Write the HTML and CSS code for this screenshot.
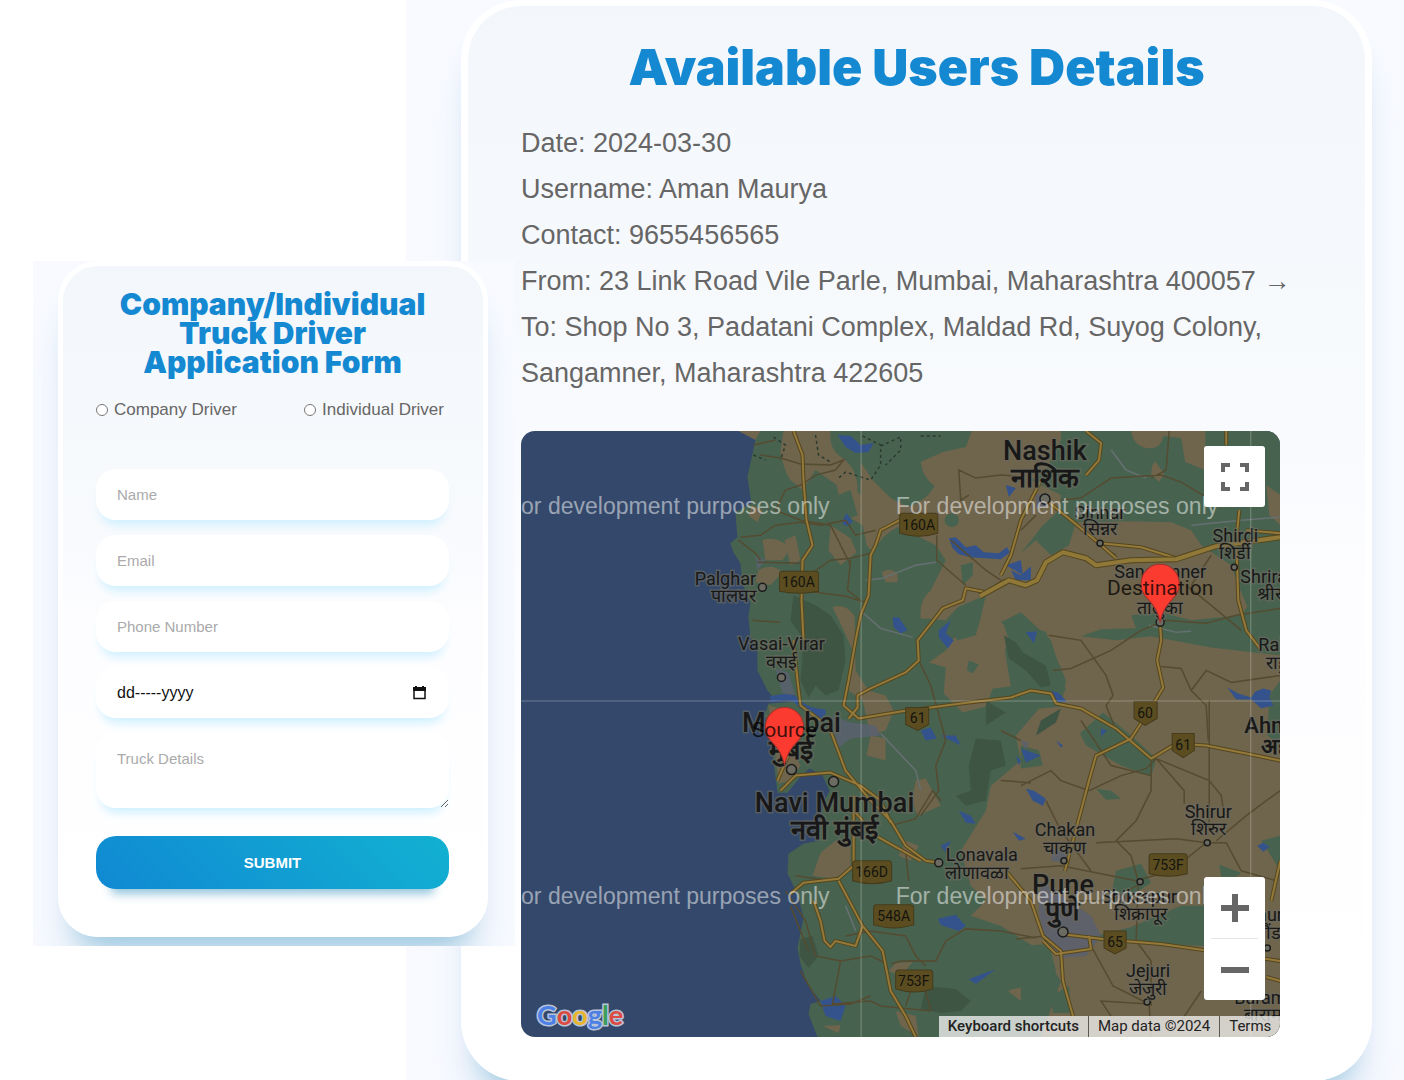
FILE: index.html
```html
<!DOCTYPE html>
<html lang="en">
<head>
<meta charset="utf-8">
<meta name="viewport" content="width=device-width, initial-scale=1">
<title>Available Users Details</title>
<link rel="stylesheet" href="styles.css">
</head>
<body>
<main class="page">
  <section class="panel panel-details">
    <article class="card card-details">
      <h1 class="heading heading-large">Available Users Details</h1>
      <div class="facts">
        <p>Date: 2024-03-30</p>
        <p>Username: Aman Maurya</p>
        <p>Contact: 9655456565</p>
        <p>From: 23 Link Road Vile Parle, Mumbai, Maharashtra 400057 →<br>To: Shop No 3, Padatani Complex, Maldad Rd, Suyog Colony, Sangamner, Maharashtra 422605</p>
      </div>
      <div class="map">
        <svg class="map-canvas" viewBox="521 431 758 605" preserveAspectRatio="xMidYMid slice" role="img" aria-label="Route map from Mumbai to Sangamner">
          <rect x="521" y="431" width="758" height="605" fill="#33486a"/>
          <!-- land -->
          <path fill="#47634f" d="M757 431L747 477L751 503L735 512L737 537L730 543L733 552L740 563L742 583L750 603L748 617L750 637L757 648V670L767 690L773 697L793 694L800 700L785 702L768 703L764 715L771 730L773 760L777 792L787 792L800 776L809 768L822 775L829 790L824 800L820 817L818 840L803 843L788 853L787 873L797 893L803 917L799 937L797 947L800 963L807 983L820 1000L810 1003L808 1013L817 1036H1279V431Z"/>
          <g fill="#6f644c">
            <path d="M783 431H808L830 431Q828 450 842 458Q858 470 857 492L875 508L900 525Q880 535 872 552L866 545L862 525L845 515Q838 500 836 485L815 470L802 490L790 480Q783 470 780 452Z"/>
            <path d="M971 431L965 447L942 452L920 462Q922 478 934 486Q926 500 908 507L890 498L872 480L860 462V500L880 520L905 530L935 545L945 560L930 590Q918 600 920 618L945 620L957 607L985 595L978 625L957 632L945 650L928 662L945 667L943 693L962 712L985 706L992 688L1010 686L1004 650L1010 630L1000 622L1020 612L1050 640L1065 690L1045 700L1015 735L1020 760L990 785L985 810L960 850L970 885L985 900L970 915L1000 925L1040 950L1060 980L1040 1036H1279V745L1266 735L1268 695L1279 680V655L1210 647L1150 636L1115 640L1080 636L1100 629L1135 628L1130 615L1160 612L1190 620L1240 615L1246 606L1237 585L1230 565L1200 545L1190 530L1170 522L1130 521L1075 522L1068 545L1050 555L1035 540L1020 553L1042 525L1058 510L1060 495L1030 480L1045 470L1060 440V431Z"/>
            <path d="M1130 431Q1132 445 1145 448Q1160 450 1162 436L1180 438L1184 462L1204 470V431Z"/>
            <path d="M1151 466L1154 461L1163 474L1158 482L1150 474ZM1265 485L1279 495V525L1268 515ZM738 431L760 431L755 440ZM758 570Q772 562 782 572L770 585L755 582ZM762 540Q776 535 790 548L782 560L765 560ZM752 505L762 510L757 522L748 515ZM784 540L795 535L800 560L790 565ZM830 525L850 538L856 552L840 565L828 550ZM881 572Q890 566 897 574V582L885 582ZM832 607Q845 602 854 616L855 670L868 690L885 695L893 710L885 730L870 735L862 700L848 690L852 650L843 630Z"/>
            <path d="M768 705L780 708L785 740L800 765L790 780L778 783L774 745ZM915 780L925 778L940 805L917 815L911 800ZM820 852L835 840H850V870L832 878L812 875ZM905 840L918 845L910 860L898 855ZM870 735L885 738V760L866 755ZM1007 990L1020 985V1000ZM822 1025L840 1024L838 1032ZM895 962L912 961L900 975L888 970ZM895 1010L915 1015L918 1036L900 1025Z"/>
          </g>
          <!-- green areas lying on the plain -->
          <g fill="#47634f">
            <path d="M962 608L980 615L975 635L957 640L946 628ZM1002 622Q1030 625 1045 632L1065 680L1060 706L1040 708L1020 700L1015 660ZM968 660L978 664L972 673L966 670ZM1079 733L1102 712L1130 735L1155 758L1150 776L1120 765L1085 745ZM1095 788L1110 790L1120 798L1105 799ZM1020 745L1038 750L1042 765L1020 768ZM1115 870L1140 863L1150 882L1130 895L1110 895ZM1095 935L1130 926L1180 905L1204 905V945L1150 943L1100 940ZM1020 945L1048 943L1055 970L1030 985L1000 990V950ZM1218 864L1240 872L1235 876H1220ZM1260 840L1279 835V870ZM1050 995L1068 985L1070 1012L1052 1012Z"/>
            <circle cx="951" cy="520" r="7"/><path d="M960 565L972 562L972 575L962 585ZM838 495L850 490L857 515L845 520Z"/>
          </g>
          <!-- woodland -->
          <g fill="#3e5544">
            <path d="M793 595L815 605L830 615L843 635L845 660L838 690L825 695L815 685L808 697L800 680L802 655L800 635L790 620ZM975 738L1000 740L1005 765L990 770L985 800L965 805L955 795L970 790L968 765ZM1003 635L1015 642L1022 652L1045 665L1050 685L1040 687L1025 670L1008 658ZM800 938L812 935L818 955L808 967L799 955ZM925 985L955 988L970 1000L960 1010L940 1012L920 1008ZM1040 720L1060 708L1055 722L1035 735ZM985 700L1005 712L985 725Z"/>
          </g>
          <!-- built-up areas -->
          <g fill="#5a6070">
            <path d="M1040 880L1060 895L1090 915L1100 935L1085 955L1060 957L1042 935L1038 910ZM1052 848L1068 850L1065 862L1050 860ZM775 668L788 672L795 695L782 693ZM832 715L850 722L875 725L880 735L850 738L835 750ZM1035 495L1048 493L1050 505L1035 508ZM755 555L765 560L757 570ZM1020 740L1028 742L1025 750Z" opacity=".8"/>
            <path d="M880 733L915 770L920 790M865 580L882 578L915 565L935 562M862 612L880 628L912 637M845 905L855 930M1110 450L1125 470L1145 478M1148 625L1175 632L1190 631M1190 525L1240 520L1279 517" fill="none" stroke="#667072" stroke-width="1.5"/>
          </g>
          <!-- water -->
          <g fill="#34538c">
            <path d="M837 435L850 436L860 445L873 443L868 452L855 453L845 447ZM843 518L846 513L852 521L848 526L842 524ZM948 538L955 537L965 547L975 545L983 552L998 553L1006 547L1009 552L1000 559L985 558L970 557L958 554L952 548ZM1010 570L1020 575L1030 566L1030 580L1015 580ZM892 617L898 617L907 630L900 633L893 627ZM938 630L950 620L945 633L953 640L947 648L938 637ZM1005 485L1015 488L1008 497ZM1025 632L1036 631L1033 643ZM1050 690L1057 692L1066 701L1055 702ZM1226 687L1237 693L1250 697L1254 691L1262 688L1270 690L1268 697L1272 705L1260 708L1250 699L1235 699ZM1100 728L1106 730L1100 736ZM1005 565L1020 560L1022 575ZM1020 748L1040 755L1025 762ZM920 730L930 727L936 738L925 740ZM1015 755L1020 760L1018 765ZM1025 788L1033 790L1045 798L1042 805L1032 800ZM940 735L955 735L960 745ZM958 810L970 815L975 823L965 822ZM940 845L950 840L945 852ZM1012 755L1025 758ZM937 918L955 914L965 925L958 930L940 924ZM968 978L995 968L975 983ZM965 970L978 972ZM1012 831L1025 838L1018 840ZM1256 845L1262 842L1268 846L1262 851ZM1055 740L1062 745L1060 747ZM820 1000L835 995L845 1005L840 1020L825 1015Z"/>
            <path d="M770 699Q790 693 798 702T825 712M815 710L822 720" stroke="#34538c" stroke-width="6" fill="none"/>
          </g>
          <!-- minor roads -->
          <g class="road-minor">
            <path d="M760 455L780 458L800 464L830 465L843 460L835 470L815 475L800 485L785 490L775 510L800 520L830 525L840 545L850 565M753 445L775 440M740 537L760 535L775 525L800 522L820 525L845 520L855 535L875 530M738 540L755 553L760 560M757 562L800 563M752 620L780 622M801 580L830 560L850 558L870 553M850 560L847 590L860 600M801 590L845 596L865 602M936 535V560L965 585M950 540L985 570L1000 580M918 660L930 685L937 710L945 740M968 495L960 500L958 470L975 478L1000 475L1015 476M1020 530L1035 515M1060 500L1080 498L1110 478L1160 475L1180 482L1210 500M1115 555L1098 545M1168 431L1165 470L1150 478M1048 635L1080 640L1105 675L1112 695L1105 705L1115 730L1130 738M1052 670L1070 668L1110 650L1140 630L1165 620L1205 623L1235 615L1279 608M1160 666L1180 668L1190 690L1205 705L1207 740M1190 690L1205 670L1230 682L1279 675M1185 585L1210 605L1240 630M1190 585L1210 555"/>
            <path d="M1020 785L1050 770L1060 780L1088 790L1120 775L1145 768L1155 758L1183 790V803M1150 758L1150 790L1135 820L1115 840L1130 855L1137 880M1095 842L1135 840L1175 838L1205 842L1225 842L1240 870L1275 880M1215 840L1245 815L1265 800L1279 790M1155 758L1208 780L1220 795L1223 815M1208 700V830M1020 868L1060 865L1135 880L1170 870L1205 842M1137 885L1135 940L1150 960V1005M1090 945L1112 985L1148 1003L1150 1036M1148 1003L1100 1000L1110 1015M1065 900L1110 900L1140 882M1015 938L1045 935M940 800L932 790L915 818L890 825M945 740L935 765L938 790L920 815M905 850L908 880M845 935L870 930L905 935L915 955L925 965M890 963L900 960H935L945 940L965 928L1000 930L1035 937M795 875L830 880M785 890L805 920L815 955L840 960L870 955L885 962M840 960L832 1003L870 1000L880 1005L930 1010M910 990L905 1005M790 905L808 950M800 970L820 1005L850 1003L870 995M1090 870L1060 830L1045 800M1000 780L1030 782M1080 720L1110 765L1150 775M1000 730L1020 740M1200 990L1180 1020M925 990L930 1010"/>
          </g>
          <path d="M773 437L785 445L780 460M862 436L880 445L880 465L870 480L845 472L838 478M880 446L900 437L900 450L885 465M815 435L818 455L830 462M753 455L765 460M920 436H940" fill="none" stroke="#2b3a2f" stroke-width="1.5" stroke-dasharray="3 3"/>
          <!-- highways: dark casing below, yellow line above -->
          <g class="road-casing">
            <path d="M793 431L802 455L803 480L806 520L812 545L802 560L801 600L803 640M899 520L880 530L875 545L870 555L868 595L860 615L855 640L848 680L843 705L858 718L900 711L960 703L1010 697L1030 690L1050 693L1055 703L1080 708L1115 728L1150 758L1175 743L1205 745L1250 754L1279 760M848 718L857 707V695L870 688L905 672L918 660L917 640L935 617L942 608L962 600L965 588L985 592L1005 580M1040 480L1020 520L1010 555L1000 575M1045 500L1070 520L1098 543L1115 558M1100 543L1140 547L1175 558M1159 625L1160 640L1156 660L1162 687L1145 715L1130 738L1095 755L1088 780L1080 810L1064 870M1085 431L1100 443L1098 460L1085 475M1238 510L1235 540L1237 600L1245 630L1260 650M1245 530L1279 533M1225 431V445M793 640L797 680L800 705L820 720"/>
            <path d="M830 730L845 770L870 800L890 820L905 845L925 860L938 862M855 812L875 835L920 860M780 790L795 775L830 772L860 785L880 800L890 822M853 795V865L838 878L803 882L790 893M838 880L862 925L882 950L890 990L905 1015L915 1036M813 900L820 920L824 940L830 946L835 940L855 945L862 925M777 780L790 750M1005 870L1030 900L1042 935L1060 950L1062 980L1072 1015M1060 933L1110 939L1160 943L1279 960M1042 940L1055 953L1090 948L1088 935M1265 976L1279 980M1279 860L1270 900"/>
          </g>
          <g class="road-yellow">
            <path d="M793 431L802 455L803 480L806 520L812 545L802 560L801 600L803 640M899 520L880 530L875 545L870 555L868 595L860 615L855 640L848 680L843 705L858 718L900 711L960 703L1010 697L1030 690L1050 693L1055 703L1080 708L1115 728L1150 758L1175 743L1205 745L1250 754L1279 760M848 718L857 707V695L870 688L905 672L918 660L917 640L935 617L942 608L962 600L965 588L985 592L1005 580M1040 480L1020 520L1010 555L1000 575M1045 500L1070 520L1098 543L1115 558M1100 543L1140 547L1175 558M1159 625L1160 640L1156 660L1162 687L1145 715L1130 738L1095 755L1088 780L1080 810L1064 870M1085 431L1100 443L1098 460L1085 475M1238 510L1235 540L1237 600L1245 630L1260 650M1245 530L1279 533M1225 431V445M793 640L797 680L800 705L820 720"/>
            <path d="M830 730L845 770L870 800L890 820L905 845L925 860L938 862M855 812L875 835L920 860M780 790L795 775L830 772L860 785L880 800L890 822M853 795V865L838 878L803 882L790 893M838 880L862 925L882 950L890 990L905 1015L915 1036M813 900L820 920L824 940L830 946L835 940L855 945L862 925M777 780L790 750M1005 870L1030 900L1042 935L1060 950L1062 980L1072 1015M1060 933L1110 939L1160 943L1279 960M1042 940L1055 953L1090 948L1088 935M1265 976L1279 980M1279 860L1270 900"/>
          </g>
          <path class="road-trunk-casing" d="M979 596L1008 580L1025 585L1036 580L1045 562L1062 552L1085 558L1095 565L1130 560L1175 559L1215 546L1279 537"/>
          <path class="road-trunk" d="M979 596L1008 580L1025 585L1036 580L1045 562L1062 552L1085 558L1095 565L1130 560L1175 559L1215 546L1279 537"/>
          <!-- highway shields -->
          <g class="shield">
            <path d="M902 513h32q3 0 3 3v17q-19 6-38 0v-17q0-3 3-3zM782 571h33q3 0 3 3v17q-19 4-39 0v-17q0-3 3-3zM905 707h23v17l-11 6l-12-6zM1133 701h23v17l-12 7l-11-7zM1171 733h22v17l-11 7l-11-7zM855 860h33q3 0 3 3v17q-19 6-39 0v-17q0-3 3-3zM876 904h34q3 0 3 3v17q-20 6-40 0v-17q0-3 3-3zM898 969h31q3 0 3 3v16q-18 6-37 0v-16q0-3 3-3zM1151 853h32q3 0 3 3v17q-19 5-38 0v-17q0-3 3-3zM1103 930h22v17l-11 6l-11-6z"/>
            <text x="918" y="530">160A</text><text x="798" y="587">160A</text><text x="917" y="722">61</text><text x="1144" y="717">60</text><text x="1182" y="749">61</text><text x="871" y="876">166D</text><text x="893" y="920">548A</text><text x="913" y="985">753F</text><text x="1167" y="869">753F</text><text x="1114" y="946">65</text>
          </g>
          <!-- town markers -->
          <g class="dot">
            <circle cx="762" cy="587" r="4"/><circle cx="781" cy="677" r="4"/><circle cx="791" cy="769" r="5"/><circle cx="833" cy="781" r="5"/><circle cx="938" cy="862" r="4"/><circle cx="1044" cy="499" r="5"/><circle cx="1099" cy="543" r="3"/><circle cx="1159" cy="622" r="4"/><circle cx="1233" cy="567" r="3"/><circle cx="1206" cy="842" r="3"/><circle cx="1063" cy="860" r="3"/><circle cx="1139" cy="881" r="3"/><circle cx="1062" cy="931" r="5"/><circle cx="1146" cy="1001" r="3"/><circle cx="1266" cy="947" r="3"/>
          </g>
          <!-- town names -->
          <g class="town">
            <text x="725" y="585">Palghar</text><text x="733" y="602">पालघर</text>
            <text x="781" y="650">Vasai-Virar</text><text x="781" y="668">वसई</text>
            <text x="1099" y="519">Sinnar</text><text x="1099" y="535">सिन्नर</text>
            <text x="1234" y="542">Shirdi</text><text x="1234" y="559">शिर्डी</text>
            <text x="1159" y="578">Sangamner</text><text x="1159" y="614">तालुका</text>
            <text x="981" y="860">Lonavala</text><text x="976" y="878">लोणावळा</text>
            <text x="1064" y="835">Chakan</text><text x="1064" y="853">चाकण</text>
            <text x="1207" y="817">Shirur</text><text x="1207" y="834">शिरुर</text>
            <text x="1138" y="902">Shikrapur</text><text x="1139" y="919">शिक्रापूर</text>
            <text x="1147" y="976">Jejuri</text><text x="1147" y="994">जेजुरी</text>
            <text class="from-start" x="1239" y="583">Shrirampur</text><text class="from-start" x="1256" y="600">श्रीरामपूर</text>
            <text class="from-start" x="1257" y="651">Rahuri</text><text class="from-start" x="1265" y="669">राहुरी</text>
            <text class="from-start" x="1244" y="920">Daund</text><text class="from-start" x="1255" y="938">दौंड</text>
            <text class="from-start" x="1233" y="1003">Baramati</text><text class="from-start" x="1243" y="1020">बारामती</text>
          </g>
          <g class="city">
            <text x="1044" y="460">Nashik</text><text class="local" x="1044" y="487">नाशिक</text>
            <text x="791" y="731">Mumbai</text><text class="local" x="791" y="758">मुंबई</text>
            <text x="834" y="811">Navi Mumbai</text><text class="local" x="834" y="838">नवी मुंबई</text>
            <text x="1062" y="893">Pune</text><text class="local" x="1062" y="919">पुणे</text>
            <text class="from-start ahr" x="1243" y="732">Ahmednagar</text><text class="from-start ahr local" x="1260" y="753">अहमदनगर</text>
          </g>
          <!-- tile seams and watermark -->
          <path d="M860.5 431V1036M1249.500 431V1036M521 700.500H1279" stroke="#fff" stroke-opacity=".28" fill="none"/>
          <g class="watermark">
            <text x="507" y="514">For development purposes only</text><text x="895" y="514">For development purposes only</text>
            <text x="507" y="903">For development purposes only</text><text x="895" y="903">For development purposes only</text>
          </g>
          <!-- pins -->
          <g fill="#fb3b30" stroke="#a3322c" stroke-width="1">
            <path d="M1159 622Q1157 609 1147 599Q1139 591 1140 583A19 19 0 0 1 1178 583Q1179 591 1171 599Q1161 609 1159 622Z"/>
            <path d="M784 765Q782 752 772 742Q764 734 765 726A19 19 0 0 1 803 726Q804 734 796 742Q786 752 784 765Z"/>
          </g>
          <g class="pin-label"><text x="1159" y="595">Destination</text><text x="784" y="736">Source</text></g>
          <text class="logo" x="537" y="1024"><tspan fill="#4d80e6">G</tspan><tspan fill="#dc4a41">o</tspan><tspan fill="#e8b52c">o</tspan><tspan fill="#4d80e6">g</tspan><tspan fill="#3a9d58">l</tspan><tspan fill="#dc4a41">e</tspan></text>
        </svg>
        <button class="map-button fullscreen" type="button" aria-label="Toggle fullscreen">
          <svg width="28" height="28" viewBox="0 0 28 28" fill="none" stroke="#666" stroke-width="4"><path d="M2 9V2H9M19 2H26V9M26 19V26H19M9 26H2V19"/></svg>
        </button>
        <div class="zoom">
          <button class="map-button" type="button" aria-label="Zoom in"><svg width="28" height="28" viewBox="0 0 28 28" stroke="#666" stroke-width="6"><path d="M14 0V28M0 14H28"/></svg></button>
          <button class="map-button" type="button" aria-label="Zoom out"><svg width="28" height="28" viewBox="0 0 28 28" stroke="#666" stroke-width="6"><path d="M0 14H28"/></svg></button>
        </div>
        <div class="map-footer">
          <button type="button">Keyboard shortcuts</button>
          <span>Map data ©2024</span>
          <a href="#terms">Terms</a>
        </div>
      </div>
    </article>
  </section>

  <section class="panel panel-form">
    <form class="card card-form">
      <h2 class="heading heading-small">Company/Individual<br>Truck Driver<br>Application Form</h2>
      <div class="choices">
        <label><input type="radio" name="driver" value="company">Company Driver</label>
        <label><input type="radio" name="driver" value="individual">Individual Driver</label>
      </div>
      <div class="fields">
        <input class="field" type="text" placeholder="Name" aria-label="Name">
        <input class="field" type="email" placeholder="Email" aria-label="Email">
        <input class="field" type="tel" placeholder="Phone Number" aria-label="Phone Number">
        <div class="field date-field">
          <input type="text" placeholder="dd-----yyyy" aria-label="Date">
          <svg width="13" height="14" viewBox="0 0 13 14" aria-hidden="true"><path d="M1 2.500H12V12.500H1Z" fill="none" stroke="#111" stroke-width="1.500"/><path d="M0 1H13V5H0ZM2 0H4V2H2ZM9 0H11V2H9Z" fill="#111"/></svg>
        </div>
        <textarea class="field" placeholder="Truck Details" aria-label="Truck Details"></textarea>
      </div>
      <button class="submit" type="submit">SUBMIT</button>
    </form>
  </section>
</main>
</body>
</html>
```
FILE: styles.css
```css
* {
  box-sizing: border-box;
}

body {
  margin: 0;
  background: #fff;
  color: #666;
  font-family: "Liberation Sans", Arial, sans-serif;
}

h1, h2, p {
  margin: 0;
}

input, textarea, button {
  font: inherit;
}

/* The form panel shares its last column with the details panel. */
.page {
  display: grid;
  grid-template-columns: 33px 373px 109px minmax(0, 1fr);
  align-items: start;
}

.panel {
  grid-row: 1;
  overflow: hidden;
  background: #f8faff;
}

.panel-details {
  grid-column: 3 / 5;
  padding: 0 32px 0 55px;
}

.panel-form {
  grid-column: 2 / 4;
  margin-top: 261px;
  padding: 0 27px 9px 25px;
}

.card {
  background: linear-gradient(0deg, #fff 0%, #fdfdff 45%, #f8fafd 60%, #f3f7fb 100%);
  border: 5px solid #fff;
  border-radius: 40px;
  box-shadow: 0 30px 30px -20px rgba(133, 189, 215, 0.88), 0 50px 40px rgba(215, 226, 245, 0.3);
}

.card-details {
  padding: 31px 53px 37px;
  border-width: 7px;
  border-top-width: 6px;
  border-radius: 60px;
}

.card-form {
  padding: 24px 34px 43px 33px;
}

.heading {
  color: #1489d2;
  font-family: "Arial Black", Inter, sans-serif;
  font-weight: 900;
  text-align: center;
}

.heading-large {
  font-size: 50px;
  line-height: 60px;
}

.heading-small {
  font-size: 30px;
  line-height: 29px;
}

.facts {
  margin: 23px 0 35px;
  font-size: 27px;
  line-height: 46px;
}

.map {
  position: relative;
  width: 96%;
  aspect-ratio: 758 / 605;
  overflow: hidden;
  border-radius: 14px;
  font-family: Roboto, sans-serif;
}

.map-canvas {
  display: block;
  width: 100%;
  height: 100%;
}

.road-minor {
  fill: none;
  stroke: #554b30;
  stroke-width: 1.5px;
}

.road-casing {
  fill: none;
  stroke: #54471f;
  stroke-width: 4px;
  stroke-linejoin: round;
}

.road-yellow {
  fill: none;
  stroke: #94793a;
  stroke-width: 2px;
  stroke-linejoin: round;
}

.road-trunk-casing {
  fill: none;
  stroke: #54471f;
  stroke-width: 6px;
  stroke-linejoin: round;
}

.road-trunk {
  fill: none;
  stroke: #8f7838;
  stroke-width: 4px;
  stroke-linejoin: round;
}

.shield path {
  fill: #5b4d20;
  stroke: #463b1c;
}

.shield text {
  fill: #15140f;
  font-size: 14px;
  text-anchor: middle;
}

.dot {
  fill: #6b6b62;
  stroke: #1c1c1c;
  stroke-width: 1.5px;
}

.town text,
.city text {
  fill: #181818;
  stroke: #6b6a60;
  stroke-opacity: 0.6;
  stroke-width: 3px;
  paint-order: stroke;
  text-anchor: middle;
  font-size: 18px;
}

.city text {
  font-size: 27px;
  font-weight: 500;
}

.city .local {
  font-weight: 700;
}

.city .ahr {
  font-size: 22px;
}

.town .from-start,
.city .from-start {
  text-anchor: start;
}

.watermark {
  fill: #fff;
  fill-opacity: 0.5;
  font-family: "Liberation Sans", Arial, sans-serif;
  font-size: 23px;
}

.pin-label {
  fill: #000;
  fill-opacity: 0.75;
  font-size: 21px;
  text-anchor: middle;
}

.logo {
  stroke: #b9c4d8;
  stroke-width: 3px;
  paint-order: stroke;
  font-family: Lato, sans-serif;
  font-size: 27px;
  font-weight: 700;
}

.map-button {
  display: grid;
  place-items: center;
  width: 61px;
  height: 61px;
  padding: 0;
  border: 0;
  border-radius: 3px;
  background: #fff;
}

.fullscreen {
  position: absolute;
  top: 15px;
  right: 15px;
}

.zoom {
  position: absolute;
  right: 15px;
  bottom: 37px;
  border-radius: 3px;
  background: linear-gradient(#e6e6e6, #e6e6e6) center / 47px 1px no-repeat #fff;
  display: grid;
  gap: 1px;
}

.zoom .map-button {
  background: none;
}

.map-footer {
  position: absolute;
  right: 0;
  bottom: 0;
  display: flex;
  height: 21px;
  font-size: 15px;
  line-height: 21px;
}

.map-footer > * {
  padding: 0 9px;
  border: 0;
  background: rgba(245, 245, 245, 0.75);
  color: #222;
  text-decoration: none;
  white-space: nowrap;
}

.map-footer > * + * {
  border-left: 1px solid #5c5a50;
}

.map-footer button {
  font-weight: 500;
}

.choices {
  display: flex;
  justify-content: space-between;
  margin: 22px 5px 48px 0;
  font-size: 17px;
  line-height: 22px;
}

.choices label {
  display: flex;
  align-items: center;
  gap: 6px;
}

.choices input {
  width: 12px;
  height: 12px;
  margin: 0;
}

.fields {
  display: grid;
  gap: 15px;
}

.field {
  width: 100%;
  height: 51px;
  padding: 0 21px;
  border: 0;
  border-radius: 20px;
  outline: 0;
  background: #fff;
  box-shadow: 0 10px 10px -5px #cff0ff;
  font-size: 15px;
}

.field::placeholder {
  color: #aaa;
}

.date-field {
  display: flex;
  align-items: center;
  padding-right: 23px;
}

.date-field input {
  flex: 1;
  min-width: 0;
  padding: 0;
  border: 0;
  outline: 0;
  background: none;
  font-size: 16px;
}

.date-field input::placeholder {
  color: #111;
}

textarea.field {
  display: block;
  height: 75px;
  padding-top: 17px;
  resize: vertical;
}

.submit {
  display: block;
  width: 100%;
  height: 53px;
  margin-top: 28px;
  border: 0;
  border-radius: 20px;
  background: linear-gradient(45deg, #1089d3 0%, #12b1d1 100%);
  box-shadow: 0 20px 10px -15px rgba(133, 189, 215, 0.88);
  color: #fff;
  font-size: 15px;
  font-weight: 700;
}
```
